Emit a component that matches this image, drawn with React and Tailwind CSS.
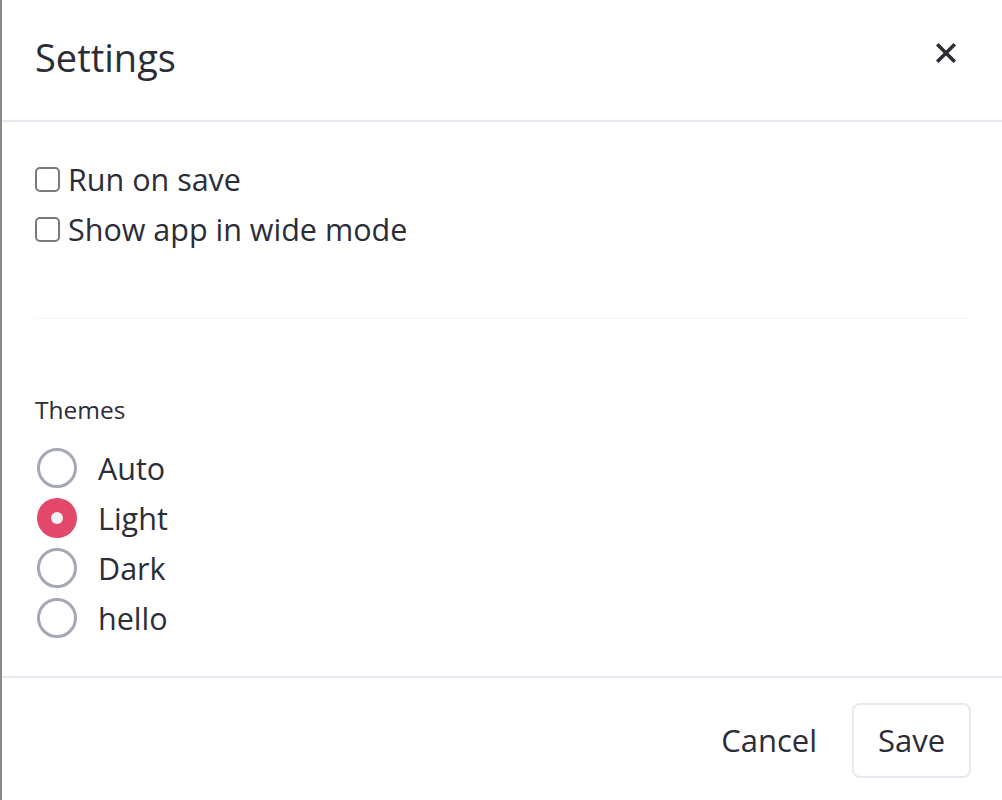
import { useState } from 'react';

const themes = ['Auto', 'Light', 'Dark', 'hello'];

function Checkbox({ label }) {
  return (
    <label className="flex items-center h-[50px] gap-[8px] cursor-pointer">
      <span className="w-[25px] h-[25px] rounded-[5px] border-2 border-[#7a7a7a] bg-white shrink-0" />
      <span className="text-[30.5px] leading-none text-[#2b2d38]">{label}</span>
    </label>
  );
}

function Radio({ label, checked, onClick }) {
  return (
    <div className="flex items-center h-[50px] pl-[2px] gap-[21px] cursor-pointer" onClick={onClick}>
      {checked ? (
        <span className="w-[40px] h-[40px] rounded-full bg-[#e3486b] flex items-center justify-center shrink-0">
          <span className="w-[12px] h-[12px] rounded-full bg-[#f0f2f6]" />
        </span>
      ) : (
        <span className="w-[40px] h-[40px] rounded-full border-[3.5px] border-[#a5a9b6] bg-white shrink-0" />
      )}
      <span className="text-[30.5px] leading-none text-[#2b2d38]">{label}</span>
    </div>
  );
}

export default function App() {
  const [theme, setTheme] = useState('Light');

  return (
    <div className="w-full h-[800px] bg-white border-l-2 border-[#8a8a8a] flex flex-col font-['Open_Sans',sans-serif] overflow-hidden">
      <div className="h-[122px] shrink-0 flex items-center justify-between pl-[33px] pr-[45px] border-b-2 border-[#e6e9ef]">
        <h1 className="text-[38px] leading-none text-[#2b2d38] -mt-[6px]">Settings</h1>
        <button className="w-[22px] h-[22px] flex items-center justify-center -mt-[14px]">
          <svg width="22" height="22" viewBox="0 0 22 22" fill="none" stroke="#2b2d38" strokeWidth="3.6" strokeLinecap="square">
            <path d="M3.5 3.5L18.5 18.5M18.5 3.5L3.5 18.5" />
          </svg>
        </button>
      </div>

      <div className="flex-1 flex flex-col pl-[33px] pr-[32px] pt-[32px]">
        <Checkbox label="Run on save" />
        <Checkbox label="Show app in wide mode" />

        <div className="mt-[64px] h-px bg-[#f3f4f7]" />

        <div className="mt-[73px] h-[36px] flex items-center text-[24.5px] text-[#2b2d38]">Themes</div>
        <div className="mt-[15px] flex flex-col">
          {themes.map((t) => (
            <Radio key={t} label={t} checked={theme === t} onClick={() => setTheme(t)} />
          ))}
        </div>
      </div>

      <div className="h-[124px] shrink-0 border-t-2 border-[#e6e9ef] flex items-start justify-end gap-[35px] pt-[25px] pr-[31px]">
        <button className="h-[75px] flex items-center text-[31px] text-[#2b2d38]">Cancel</button>
        <button className="h-[75px] w-[119px] rounded-[8px] border-2 border-[#e6e9ef] flex items-center justify-center text-[31px] text-[#2b2d38]">
          Save
        </button>
      </div>
    </div>
  );
}
